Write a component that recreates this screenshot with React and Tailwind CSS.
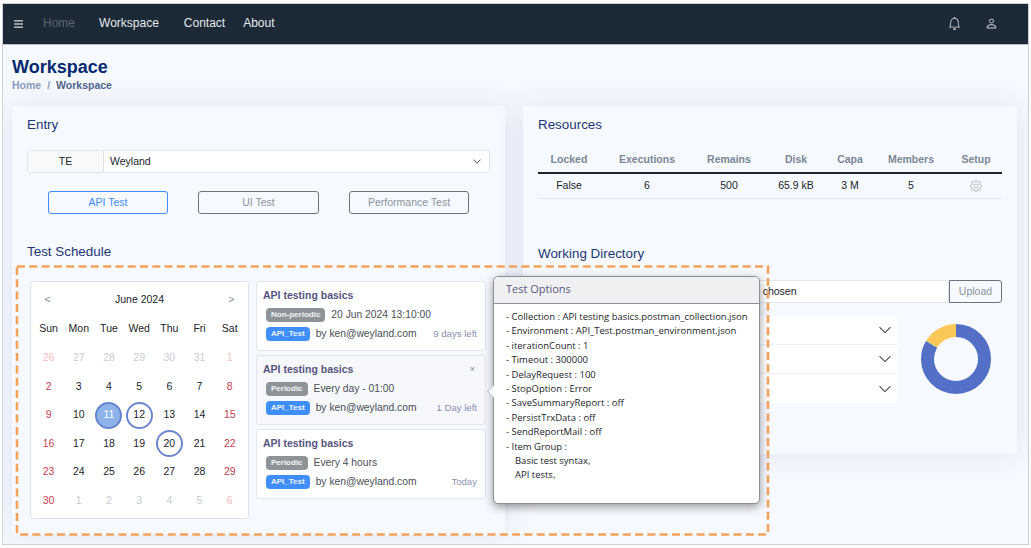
import React from "react";
import { BsBell, BsPerson, BsGear, BsChevronDown } from "react-icons/bs";

const weeks = [
  [26, 27, 28, 29, 30, 31, 1],
  [2, 3, 4, 5, 6, 7, 8],
  [9, 10, 11, 12, 13, 14, 15],
  [16, 17, 18, 19, 20, 21, 22],
  [23, 24, 25, 26, 27, 28, 29],
  [30, 1, 2, 3, 4, 5, 6],
];

function Day({ n, w, i }) {
  const out = (w === 0 && (n > 20 || n === 1)) || (w === 5 && n < 20);
  const weekend = i === 0 || i === 6;
  let color = "text-[#212529]";
  if (weekend) color = out ? "text-[#f7bcc0]" : "text-[#c9404f]";
  else if (out) color = "text-[#c9cccf]";
  let ring = "";
  if (!out && n === 11) {
    ring = "bg-[#8db4e8] border-2 border-[#6484cf]";
    color = "text-white";
  } else if (!out && (n === 12 || n === 20)) {
    ring = "border-2 border-[#6b87cf]";
  }
  return (
    <div className="flex items-center justify-center">
      <span className={`flex h-[27px] w-[27px] items-center justify-center rounded-full ${ring} ${color}`}>{n}</span>
    </div>
  );
}

function Badge({ blue, children }) {
  return (
    <span className={`flex h-[14px] items-center rounded-[4px] px-[5px] text-[8px] font-bold text-white/90 ${blue ? "bg-[#3f8efc]" : "bg-[#8e9397]"}`}>
      {children}
    </span>
  );
}

function ScheduleCard({ badge, when, left, active }) {
  return (
    <div className={`h-[70px] w-[230px] rounded-[3px] border border-[#e3e6ee] pl-[6px] pr-[8px] pt-[7px] ${active ? "bg-[#f6f8fb]" : "bg-white"}`}>
      <div className="flex h-[14px] items-center justify-between text-[10.5px] font-bold text-[#57557f]">
        <span>API testing basics</span>
        {active && <span className="mr-[2px] text-[9px] font-normal text-[#8a8f98]">×</span>}
      </div>
      <div className="mt-[5px] flex h-[14px] items-center gap-[6px] pl-[3px] text-[10.3px] text-[#4a4f57]">
        <Badge>{badge}</Badge>
        <span>{when}</span>
      </div>
      <div className="mt-[5px] flex h-[14px] items-center pl-[3px] text-[10.3px] text-[#4a4f57]">
        <Badge blue>API_Test</Badge>
        <span className="ml-[6px]">by ken@weyland.com</span>
        <span className="ml-auto text-[9.6px] text-[#8b8fb5]">{left}</span>
      </div>
    </div>
  );
}

function Btn({ blue, wide, children }) {
  return (
    <button className={`h-[23px] rounded-[3px] border text-[10.5px] ${wide ? "w-[121px]" : "w-[120px]"} ${blue ? "border-[#3d8bfd] text-[#3d8bfd]" : "border-[#6c757d] text-[#8b939b]"}`}>
      {children}
    </button>
  );
}

const cols = [
  ["Locked", "False", "w-[62px]"],
  ["Executions", "6", "w-[94px]"],
  ["Remains", "500", "w-[70px]"],
  ["Disk", "65.9 kB", "w-[64px]"],
  ["Capa", "3 M", "w-[44px]"],
  ["Members", "5", "w-[78px]"],
  ["Setup", null, "w-[52px]"],
];

const options = [
  "Collection : API testing basics.postman_collection.json",
  "Environment : API_Test.postman_environment.json",
  "iterationCount : 1",
  "Timeout : 300000",
  "DelayRequest : 100",
  "StopOption : Error",
  "SaveSummaryReport : off",
  "PersistTrxData : off",
  "SendReportMail : off",
  "Item Group :",
];

export default function App() {
  return (
    <div className="relative h-[548px] w-[1031px] overflow-hidden bg-white font-['Liberation_Sans',sans-serif]">
      <div className="ml-[2px] mt-[3px] h-[542px] w-[1027px] overflow-hidden border border-[#cfd2d6] bg-[#f6f9ff]">
        <header className="flex h-[41px] items-center border-b border-[#b9bec4] bg-[#1c2936] pb-[2px] text-[12px] text-[#e6e9ec]">
          <svg width="9" height="8" viewBox="0 0 9 8" className="ml-[11px] mt-[2px] fill-[#aeb3b8]">
            <rect y="0" width="9" height="1.6" />
            <rect y="3.2" width="9" height="1.6" />
            <rect y="6.4" width="9" height="1.6" />
          </svg>
          <span className="ml-[20px] text-[#5c6670]">Home</span>
          <span className="ml-[24px]">Workspace</span>
          <span className="ml-[25px]">Contact</span>
          <span className="ml-[18px]">About</span>
          <BsBell className="ml-auto h-[13px] w-[13px] text-[#d5d8db]" />
          <BsPerson className="ml-[24px] mr-[30px] h-[13px] w-[13px] text-[#d5d8db]" />
        </header>

        <main className="px-[9px]">
          <h1 className="mt-[12px] h-[20px] text-[18px] font-bold leading-[20px] text-[#012970]">Workspace</h1>
          <div className="mt-[2px] flex h-[14px] items-center text-[10.5px] font-bold text-[#899bbd]">
            <span>Home</span>
            <span className="mx-[6px]">/</span>
            <span className="text-[#51678f]">Workspace</span>
          </div>

          <div className="mt-[13px] flex items-start gap-[18px]">
            <section className="h-[429px] w-[493px] rounded-[4px] bg-[#f6f9ff] px-[15px] pt-[10px] shadow-[0_0_30px_rgba(1,41,112,0.1)]">
              <h2 className="h-[18px] text-[13.4px] leading-[18px] text-[#1c3775]">Entry</h2>
              <div className="mt-[16px] flex h-[23px] w-[463px] rounded-[3px] border border-[#e3e6ea] bg-white text-[10.5px] text-[#212529]">
                <span className="flex w-[76px] items-center justify-center border-r border-[#dee2e6] bg-[#f8f9fa]">TE</span>
                <span className="flex flex-1 items-center pl-[6px]">Weyland</span>
                <BsChevronDown className="mr-[6px] mt-[6px] h-[9px] w-[12px] text-[#343a40]" />
              </div>
              <div className="ml-[21px] mt-[18px] flex gap-[30px]">
                <Btn blue>API Test</Btn>
                <Btn wide>UI Test</Btn>
                <Btn>Performance Test</Btn>
              </div>
              <h2 className="mt-[29px] h-[18px] text-[13.4px] leading-[18px] text-[#1c3775]">Test Schedule</h2>

              <div className="ml-[3px] mt-[20px] flex items-start gap-[7px]">
                <div className="h-[238px] w-[219px] rounded-[3px] border border-[#dfe2e8] bg-white px-[2.5px] text-[10.5px] text-[#212529]">
                  <div className="flex h-[33px] items-center justify-between px-[11px] pt-[3px]">
                    <span className="text-[#8a8f96]">&lt;</span>
                    <span>June 2024</span>
                    <span className="text-[#8a8f96]">&gt;</span>
                  </div>
                  <div className="grid auto-rows-[28.6px] grid-cols-[repeat(7,30.2px)]">
                    {["Sun", "Mon", "Tue", "Wed", "Thu", "Fri", "Sat"].map((d) => (
                      <div key={d} className="flex items-center justify-center">{d}</div>
                    ))}
                    {weeks.map((row, w) => row.map((n, i) => <Day key={`${w}-${i}`} n={n} w={w} i={i} />))}
                  </div>
                </div>
                <div className="flex flex-col gap-[4px]">
                  <ScheduleCard badge="Non-periodic" when="20 Jun 2024 13:10:00" left="9 days left" />
                  <ScheduleCard badge="Periodic" when="Every day - 01:00" left="1 Day left" active />
                  <ScheduleCard badge="Periodic" when="Every 4 hours" left="Today" />
                </div>
              </div>
            </section>

            <section className="h-[348px] w-[494px] rounded-[4px] bg-[#f6f9ff] px-[15px] pt-[10px] shadow-[0_0_30px_rgba(1,41,112,0.1)]">
              <h2 className="h-[18px] text-[13.4px] leading-[18px] text-[#1c3775]">Resources</h2>
              <div className="mt-[16px] flex h-[24px] w-[464px] border-b-2 border-[#212529] pb-[2px]">
                {cols.map(([h, , w]) => (
                  <span key={h} className={`${w} flex items-center justify-center text-[10.5px] font-bold text-[#7b8794]`}>{h}</span>
                ))}
              </div>
              <div className="flex h-[25px] w-[464px] border-b border-[#e3e7ef] text-[10.5px] text-[#212529]">
                {cols.map(([h, v, w]) => (
                  <span key={h} className={`${w} flex items-center justify-center`}>
                    {v ?? <BsGear className="h-[12px] w-[12px] text-[#a9b0b8]" />}
                  </span>
                ))}
              </div>

              <h2 className="mt-[46px] h-[18px] text-[13.4px] leading-[18px] text-[#1c3775]">Working Directory</h2>
              <div className="ml-[1px] mt-[17px] flex h-[23px] w-[463px] text-[10.5px] text-[#212529]">
                <div className="flex flex-1 items-center rounded-l-[3px] border border-[#e1e5ea] bg-white">
                  <span className="flex h-full w-[183px] items-center justify-center border-r border-[#dee2e6] bg-[#f8f9fa]">Choose File</span>
                  <span className="ml-[7px]">No file chosen</span>
                </div>
                <button className="w-[53px] rounded-r-[3px] border border-[#6c757d] text-[#8b939b]">Upload</button>
              </div>
              <div className="mt-[13px] flex items-start gap-[23px]">
                <div className="ml-[1px] w-[359px] rounded-[3px] bg-white">
                  {[0, 1, 2].map((i) => (
                    <div key={i} className="flex h-[29px] items-center justify-end border-b border-[#edf0f4] pr-[5px] last:border-b-0">
                      <BsChevronDown className="h-[14px] w-[16px] text-[#343a40]" />
                    </div>
                  ))}
                </div>
                <svg width="70" height="70" viewBox="0 0 70 70" className="mt-[8px] -rotate-90">
                  <circle cx="35" cy="35" r="28.5" fill="none" stroke="#5470c6" strokeWidth="13" pathLength="360" strokeDasharray="301 59" />
                  <circle cx="35" cy="35" r="28.5" fill="none" stroke="#91cc75" strokeWidth="13" pathLength="360" strokeDasharray="1 359" strokeDashoffset="-301" />
                  <circle cx="35" cy="35" r="28.5" fill="none" stroke="#fac858" strokeWidth="13" pathLength="360" strokeDasharray="58 302" strokeDashoffset="-302" />
                </svg>
              </div>
            </section>
          </div>
        </main>
      </div>

      {/* highlight annotation */}
      <svg className="pointer-events-none absolute left-0 top-0" width="1031" height="548">
        <rect x="17" y="266.5" width="751" height="268" fill="none" stroke="#f5a35c" strokeWidth="2.6" strokeDasharray="8 4.3" />
      </svg>

      {/* popover */}
      <div className="absolute left-[493px] top-[276px] h-[228px] w-[267px] rounded-[5px] border border-[#8b8f96] bg-white font-['Open_Sans',sans-serif] shadow-[0_3px_10px_rgba(0,0,0,0.4)]">
        <span className="absolute left-[-5px] top-[110px] h-[9px] w-[9px] rotate-45 border-b border-l border-[#c3c6cb] bg-white" />
        <div className="flex h-[27px] items-center rounded-t-[5px] border-b border-[#8b8f96] bg-[#f0f0f3] pb-[1px] pl-[12px] text-[11px] text-[#57557f]">
          Test Options
        </div>
        <div className="relative pl-[12px] pt-[6px] text-[9.48px] leading-[14.4px] text-[#212529]">
          {options.map((o) => (
            <div key={o}>- {o}</div>
          ))}
          <div className="pl-[9px]">Basic test syntax,</div>
          <div className="pl-[9px]">API tests,</div>
        </div>
      </div>
    </div>
  );
}
